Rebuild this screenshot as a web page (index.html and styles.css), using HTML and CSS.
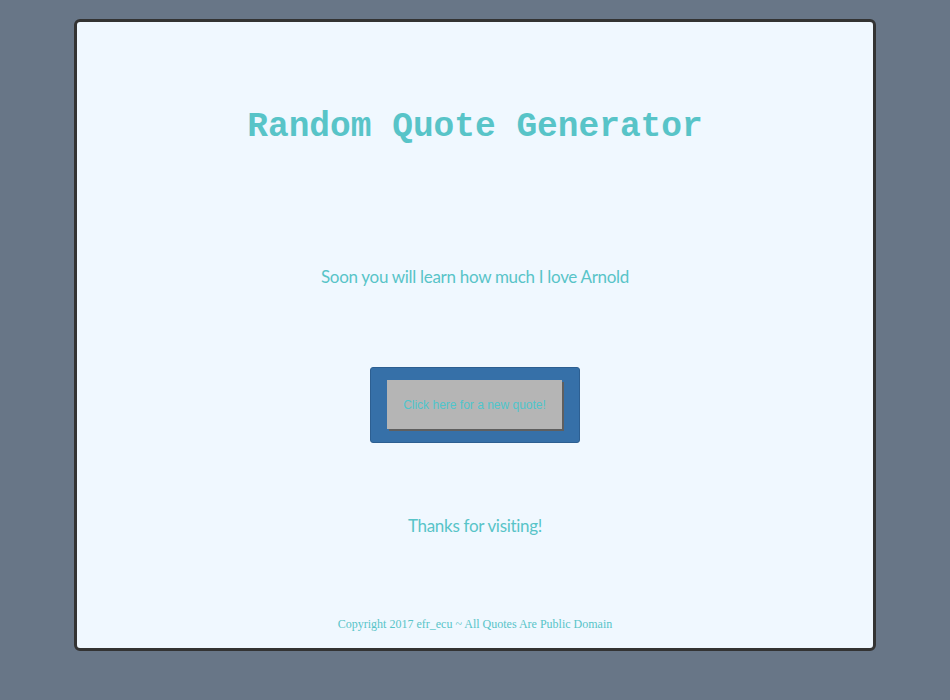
FILE: index.html
```html
<!DOCTYPE html>
<html>
<head>
<meta charset="utf-8">
<title>Random Quote Generator</title>
<link rel="stylesheet" href="styles.css">
</head>
<body>
<div class="card">
  <h1 class="title">Random Quote Generator</h1>
  <p class="quote">Soon you will learn how much I love Arnold</p>
  <div class="btn-wrap">
    <button class="btn">Click here for a new quote!</button>
  </div>
  <p class="thanks">Thanks for visiting!</p>
  <p class="copy">Copyright 2017 efr_ecu ~ All Quotes Are Public Domain</p>
</div>
</body>
</html>
```
FILE: styles.css
```css
html, body {
  margin: 0;
  padding: 0;
}
body {
  background: #687687;
  padding-top: 19px;
  height: 700px;
  box-sizing: border-box;
}
.card {
  width: 796px;
  margin: 0 auto;
  background: #f0f8ff;
  border: 3px solid #333;
  border-radius: 6px;
  height: 626px;
  display: flex;
  flex-direction: column;
  align-items: center;
  color: #58c4c8;
}
.title {
  margin: 85px 0 0;
  font-family: "Liberation Mono", monospace;
  font-weight: bold;
  font-size: 34.5px;
  line-height: 40px;
}
.quote {
  margin: 118px 0 0;
  font-family: "Lato", sans-serif;
  font-size: 17px;
  line-height: 24px;
  letter-spacing: -0.3px;
}
.btn-wrap {
  margin-top: 78px;
  width: 210px;
  height: 76px;
  box-sizing: border-box;
  background: #3670a8;
  border: 1px solid #2d5f91;
  border-radius: 3px;
  display: flex;
  align-items: center;
  justify-content: center;
}
.btn {
  width: 175px;
  height: 49px;
  background: #b5b5b5;
  border: none;
  box-shadow: 2px 2px 0 #5f5f5f;
  color: #4fc5cc;
  font-family: "Liberation Sans", Arial, sans-serif;
  font-size: 12px;
  padding: 0;
  margin: 0 1px 1px 0;
}
.thanks {
  margin: 71px 0 0;
  font-family: "Lato", sans-serif;
  font-size: 17px;
  line-height: 24px;
  letter-spacing: -0.3px;
}
.copy {
  margin: 78px 0 0;
  font-family: "Liberation Serif", serif;
  font-size: 12px;
  line-height: 16px;
}
```
